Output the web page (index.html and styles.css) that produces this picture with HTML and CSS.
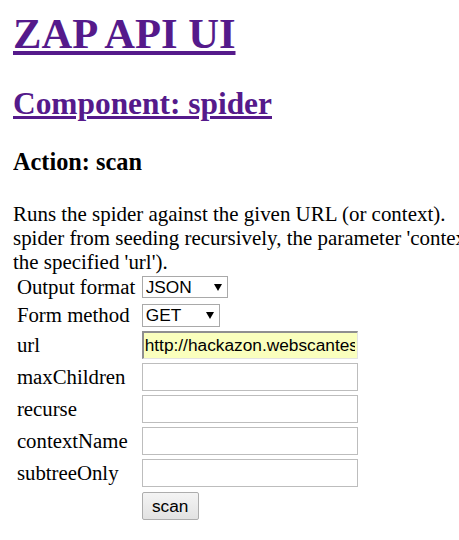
FILE: index.html
```html
<!DOCTYPE html>
<html lang="en">
<head>
<meta charset="utf-8">
<title>ZAP API UI</title>
<link rel="stylesheet" href="styles.css">
</head>
<body>
<h1 class="title"><a class="link" href="#">ZAP API UI</a></h1>
<h2 class="component"><a class="link" href="#">Component: spider</a></h2>
<h3 class="action">Action: scan</h3>
<div class="desc">Runs the spider against the given URL (or context).<br>spider from seeding recursively, the parameter 'contextName' can be used to constrain the scan to a Context and the parameter 'subtreeOnly' allows to restrict the spider under a site's subtree (using<br>the specified 'url').</div>
<form class="api-form">
  <label class="lbl" for="format">Output format</label>
  <div class="ctl"><span class="select-wrap select-format"><select class="select" id="format"><option>JSON</option><option>HTML</option><option>XML</option></select></span></div>
  <label class="lbl" for="method">Form method</label>
  <div class="ctl"><span class="select-wrap select-method"><select class="select" id="method"><option>GET</option><option>POST</option></select></span></div>
  <label class="lbl" for="url">url</label>
  <div class="ctl"><input class="field field-filled" id="url" type="text" value="http://hackazon.webscantest.com/"></div>
  <label class="lbl" for="maxChildren">maxChildren</label>
  <div class="ctl"><input class="field" id="maxChildren" type="text"></div>
  <label class="lbl" for="recurse">recurse</label>
  <div class="ctl"><input class="field" id="recurse" type="text"></div>
  <label class="lbl" for="contextName">contextName</label>
  <div class="ctl"><input class="field" id="contextName" type="text"></div>
  <label class="lbl" for="subtreeOnly">subtreeOnly</label>
  <div class="ctl"><input class="field" id="subtreeOnly" type="text"></div>
  <span class="lbl"></span>
  <div class="ctl"><button class="btn" type="button">scan</button></div>
</form>
</body>
</html>
```
FILE: styles.css
```css
html, body {
  overflow: hidden;
}
body {
  margin: 10px 0 0 13px;
  font-family: "Liberation Serif", "Times New Roman", serif;
  font-size: 20.8px;
  color: #000;
  background: #fff;
}
.link {
  color: #551a8b;
}
.title {
  margin: 0 0 28px;
  font-size: 42.6px;
  line-height: 48px;
}
.component {
  margin: 0 0 26px;
  font-size: 31.4px;
  line-height: 36px;
}
.action {
  margin: 0 0 26px;
  font-size: 24.3px;
  line-height: 28px;
}
.desc {
  white-space: nowrap;
  font-size: 20.95px;
  line-height: 24px;
}
.api-form {
  display: grid;
  grid-template-columns: max-content max-content;
  column-gap: 6.4px;
  row-gap: 4px;
  margin: 1px 0 0 3.9px;
}
.lbl {
  align-self: center;
  line-height: 24px;
}
.ctl {
  display: flex;
  align-items: center;
  min-height: 24px;
}
.select-wrap {
  position: relative;
  display: inline-block;
}
.select-wrap::after {
  content: "";
  position: absolute;
  top: 8px;
  right: 6px;
  border-left: 4.5px solid transparent;
  border-right: 4.5px solid transparent;
  border-top: 7px solid #000;
  pointer-events: none;
}
.select {
  appearance: none;
  -webkit-appearance: none;
  display: block;
  height: 22px;
  margin: 0;
  padding: 0 0 0 3px;
  border: 1px solid #a9a9a9;
  border-radius: 0;
  background: #fff;
  color: #000;
  font-family: "Liberation Sans", Arial, sans-serif;
  font-size: 17.3px;
  line-height: 20px;
}
.select-format .select {
  width: 86px;
}
.select-method .select {
  width: 78px;
  height: 23px;
}
.field {
  box-sizing: border-box;
  width: 216px;
  height: 28px;
  margin: 0;
  padding: 0 2px;
  border: 1px solid #bdbdbd;
  background: #fff;
  font-family: "Liberation Sans", Arial, sans-serif;
  font-size: 17.3px;
  color: #000;
}
.field-filled {
  background: #faffbd;
  border-width: 2px 1px 1px 2px;
  border-color: #8f8f8f #e3e3e3 #e3e3e3 #8f8f8f;
  padding-left: 1px;
}
.btn {
  box-sizing: border-box;
  width: 57px;
  height: 28px;
  margin: 1px 0 0;
  padding: 0;
  border: 1px solid #adadad;
  border-radius: 2px;
  background: linear-gradient(#f4f4f4, #e2e2e2);
  font-family: "Liberation Sans", Arial, sans-serif;
  font-size: 17.3px;
  color: #000;
}
```
